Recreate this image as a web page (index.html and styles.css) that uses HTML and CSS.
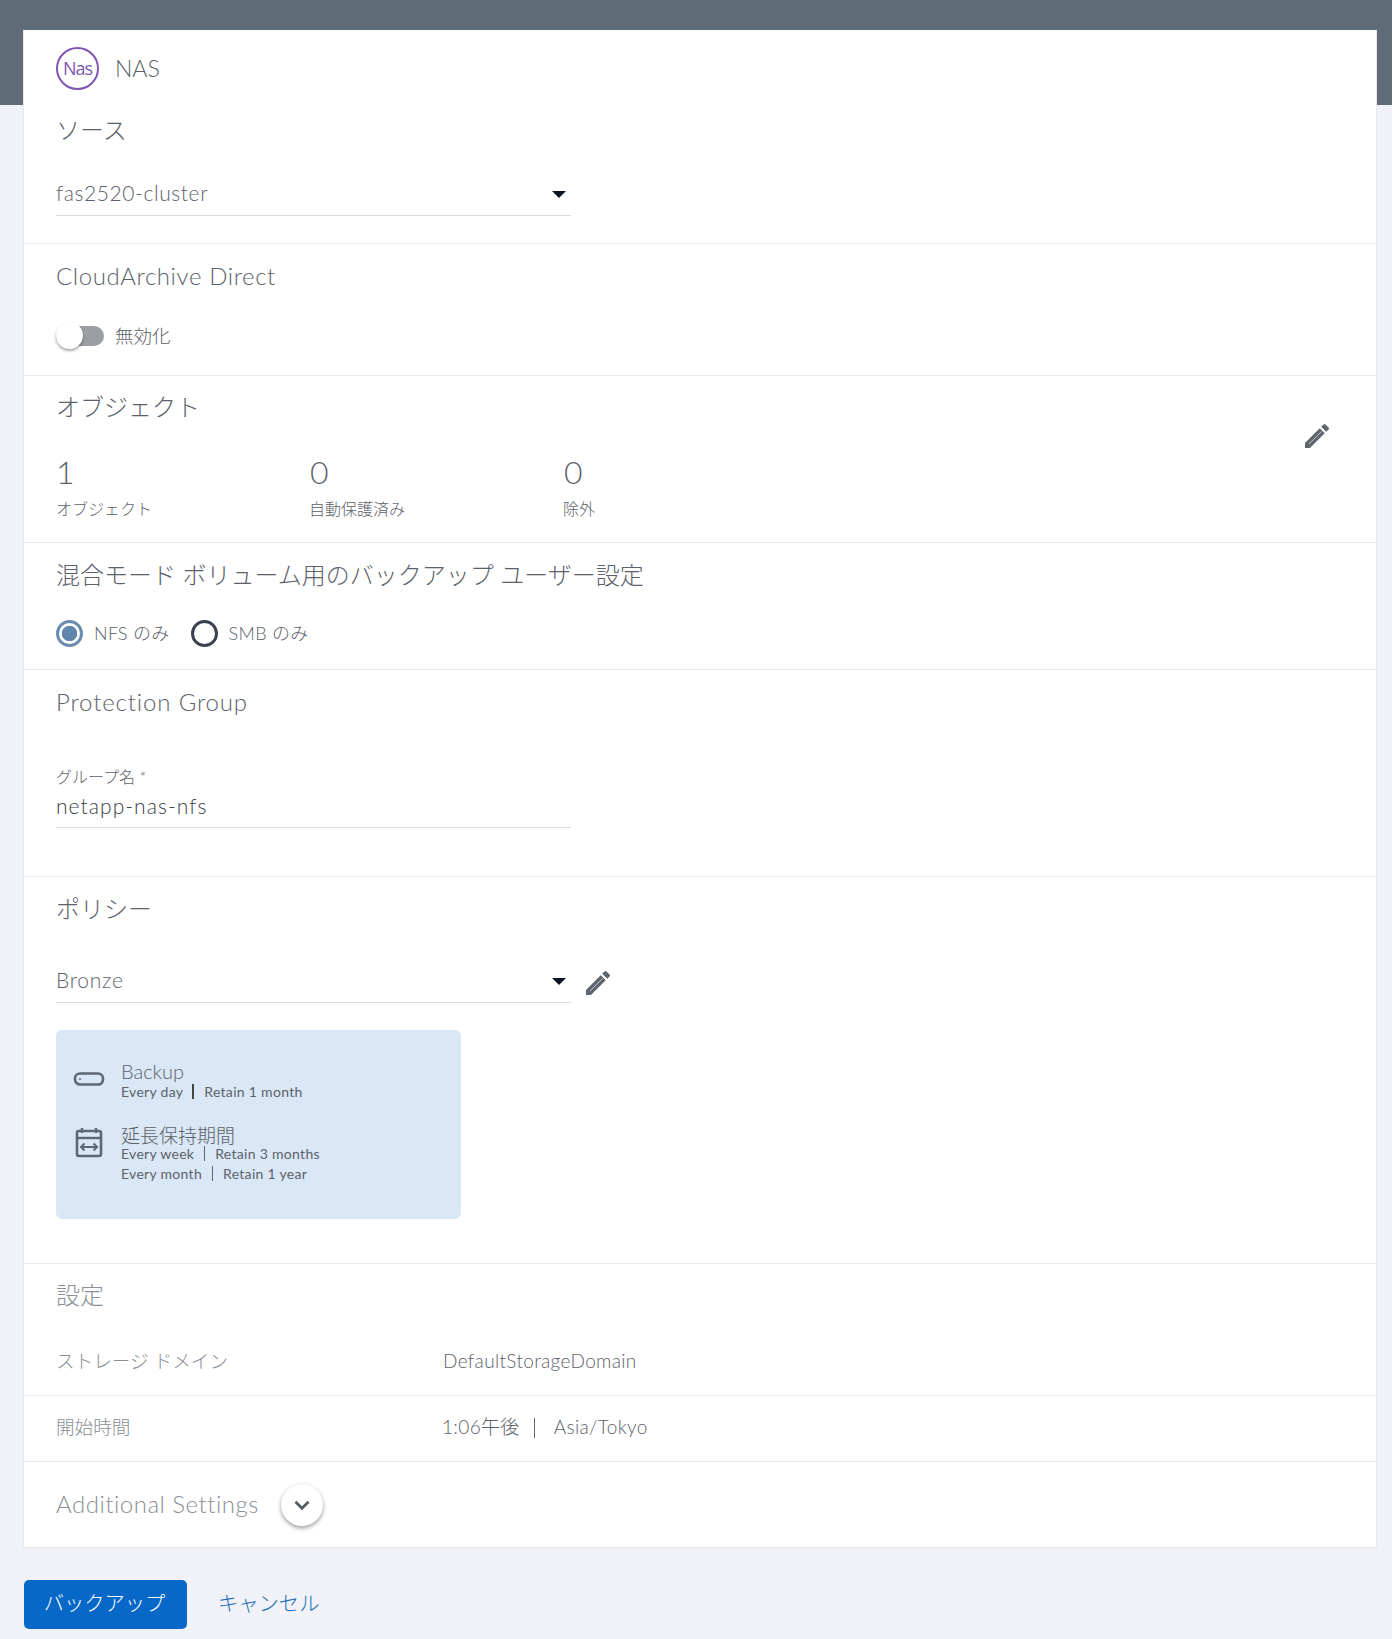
FILE: index.html
```html
<!DOCTYPE html>
<html lang="ja">
<head>
<meta charset="utf-8">
<title>NAS</title>
<link rel="stylesheet" href="styles.css">
</head>
<body>
<div class="hero"></div>
<main class="page">
  <div class="card">
    <section class="sec sec-source">
      <div class="type-row">
        <span class="nas-badge">Nas</span>
        <span class="type-name">NAS</span>
      </div>
      <h2 class="title t-source">ソース</h2>
      <div class="select s-source"><span>fas2520-cluster</span><i class="caret"></i></div>
    </section>
    <section class="sec sec-archive">
      <h2 class="title title-en">CloudArchive Direct</h2>
      <div class="toggle-row">
        <span class="toggle"><span class="knob"></span></span>
        <span class="small">無効化</span>
      </div>
    </section>
    <section class="sec sec-objects">
      <h2 class="title">オブジェクト</h2>
      <div class="stats">
        <div class="stat"><div class="num">1</div><div class="lab">オブジェクト</div></div>
        <div class="stat"><div class="num">0</div><div class="lab">自動保護済み</div></div>
        <div class="stat"><div class="num">0</div><div class="lab">除外</div></div>
      </div>
      <svg class="pencil pencil-obj" viewBox="0 0 24 24"><path d="M3 17.25V21h3.75L17.81 9.94l-3.75-3.75L3 17.25zM20.71 7.04a1 1 0 0 0 0-1.41l-2.34-2.34a1 1 0 0 0-1.41 0l-1.83 1.83 3.75 3.75 1.83-1.83z"/><path class="pencil-line" d="M6 18 15.300 8.700"/></svg>
    </section>
    <section class="sec sec-mixed">
      <h2 class="title">混合モード ボリューム用のバックアップ ユーザー設定</h2>
      <div class="radios">
        <span class="radio on"></span><span class="small r-lab">NFS のみ</span>
        <span class="radio"></span><span class="small r-lab">SMB のみ</span>
      </div>
    </section>
    <section class="sec sec-group">
      <h2 class="title title-en">Protection Group</h2>
      <div class="float-label">グループ名 *</div>
      <div class="select s-group"><span>netapp-nas-nfs</span></div>
    </section>
    <section class="sec sec-policy">
      <h2 class="title">ポリシー</h2>
      <div class="policy-select">
        <div class="select s-policy"><span>Bronze</span><i class="caret"></i></div>
        <svg class="pencil pencil-pol" viewBox="0 0 24 24"><path d="M3 17.25V21h3.75L17.81 9.94l-3.75-3.75L3 17.25zM20.71 7.04a1 1 0 0 0 0-1.41l-2.34-2.34a1 1 0 0 0-1.41 0l-1.83 1.83 3.75 3.75 1.83-1.83z"/><path class="pencil-line" d="M6 18 15.300 8.700"/></svg>
      </div>
      <div class="policy-card">
        <div class="p-row">
          <svg class="p-icon p-icon-pill" viewBox="0 0 32 32"><rect x="2" y="10.500" width="28" height="11" rx="5" fill="none" stroke="#5f6872" stroke-width="2.600"/><circle cx="7" cy="16" r="1" fill="#5f6872"/></svg>
          <div class="p-text">
            <div class="p-head p-head-en">Backup</div>
            <div class="p-sub">Every day<i class="bar bar-strong"></i>Retain 1 month</div>
          </div>
        </div>
        <div class="p-row p-row2">
          <svg class="p-icon p-icon-cal" viewBox="0 0 32 32"><path d="M9 2v5M23 2v5" stroke="#5f6872" stroke-width="2.400" fill="none"/><rect x="4" y="5" width="24" height="25" rx="2" fill="none" stroke="#5f6872" stroke-width="2.600"/><path d="M4 12h24" stroke="#5f6872" stroke-width="2.400"/><path d="M8 21h16M11.500 17.500 8 21l3.500 3.500M20.500 17.500 24 21l-3.500 3.500" stroke="#5f6872" stroke-width="2" fill="none"/></svg>
          <div class="p-text">
            <div class="p-head">延長保持期間</div>
            <div class="p-sub p-sub1">Every week<i class="bar"></i>Retain 3 months</div>
            <div class="p-sub p-sub2">Every month<i class="bar"></i>Retain 1 year</div>
          </div>
        </div>
      </div>
    </section>
    <section class="sec sec-settings">
      <h2 class="title muted">設定</h2>
      <div class="kv kv-first"><span class="k">ストレージ ドメイン</span><span class="v">DefaultStorageDomain</span></div>
    </section>
    <section class="sec sec-start">
      <div class="kv"><span class="k">開始時間</span><span class="v v-time">1:06午後<i class="bar bar-v"></i>Asia/Tokyo</span></div>
    </section>
    <section class="sec sec-more">
      <span class="more-text">Additional Settings</span>
      <button class="round" type="button"><svg viewBox="0 0 24 24"><path d="M6 9 12 15 18 9" fill="none" stroke="#565d66" stroke-width="2.600"/></svg></button>
    </section>
  </div>
  <div class="actions">
    <button class="primary" type="button">バックアップ</button>
    <a class="cancel" href="#">キャンセル</a>
  </div>
</main>
</body>
</html>
```
FILE: styles.css
```css
* { box-sizing: border-box; }
html, body { margin: 0; padding: 0; }
body {
  height: 1639px;
  overflow: hidden;
  background: #f0f2f7;
  color: #5c626a;
  font-family: Lato, "Noto Sans CJK JP", sans-serif;
  font-weight: 300;
  position: relative;
}
.hero { position: absolute; left: 0; top: 0; right: 0; height: 105px; background: #5f6c78; }
.page { position: relative; padding: 30px 16px 0 23px; }
.card { background: #fff; border: 1px solid #e6e8eb; border-top: 0; width: 1354px; height: 1518px; display: flex; flex-direction: column; }
.sec { position: relative; border-bottom: 1px solid #e7e9ec; padding-left: 32px; }
.title { margin: 0; font-size: 24px; font-weight: 300; line-height: 30px; color: #5c626a; }
.title-en { letter-spacing: 0.6px; }
.sec-group .title-en { letter-spacing: .85px; }
.muted { color: #8a8f95; }
.sec-source { height: 214px; padding-top: 17px; }
.type-row { display: flex; align-items: center; height: 42px; }
.nas-badge { width: 43px; height: 43px; border: 2px solid #7d57b2; border-radius: 50%; color: #7d57b2; display: flex; align-items: center; justify-content: center; font-size: 18px; font-weight: 400; font-family: "Open Sans", sans-serif; letter-spacing: -1px; }
.type-name { margin-left: 16px; font-size: 23px; line-height: 30px; }
.t-source { margin-top: 26px; }
.select { width: 515px; height: 46px; border-bottom: 1px solid #d9dbde; display: flex; align-items: center; justify-content: space-between; font-size: 21px; letter-spacing: 0.6px; position: relative; }
.s-source { margin-top: 25px; }
.caret { width: 0; height: 0; border-left: 7px solid transparent; border-right: 7px solid transparent; border-top: 7px solid #0b1420; margin-right: 5px; margin-top: 3px; }
.sec-archive { height: 132px; padding-top: 17px; }
.toggle-row { display: flex; align-items: center; margin-top: 31px; height: 28px; }
.toggle { display: block; position: relative; width: 48px; height: 20px; background: #9b9ea3; border-radius: 10px; }
.knob { position: absolute; left: 0; top: -4px; width: 27px; height: 27px; border-radius: 50%; background: #fff; box-shadow: 0 2px 3px rgba(0,0,0,.35); }
.small { font-size: 18px; line-height: 28px; }
.toggle-row .small { margin-left: 11px; font-size: 18.500px; }
.sec-objects { height: 167px; padding-top: 16px; }
.stats { display: flex; margin-top: 30px; }
.stat { width: 254px; }
.stat + .stat .lab { margin-left: -1px; }
.num { font-size: 32px; line-height: 40px; }
.lab { font-size: 16px; line-height: 24px; margin-top: 5px; }
.pencil { width: 32px; height: 32px; fill: #60666e; display: block; }
.pencil-line { fill: none; stroke: #fff; stroke-width: .7; opacity: .65; }
.pencil-obj { position: absolute; left: 1277px; top: 44px; }
.sec-mixed { height: 127px; padding-top: 17px; }
.radios { display: flex; align-items: center; margin-top: 29px; height: 28px; }
.radio { width: 27px; height: 27px; border-radius: 50%; border: 3px solid #39424e; flex: none; }
.radio.on { border-color: #6a8cae; background: radial-gradient(circle, #6285ab 0 7.500px, #fff 8px); }
.r-lab { margin-left: 11px; margin-right: 21px; font-size: 18px; letter-spacing: .3px; }
.sec-group { height: 207px; padding-top: 17px; }
.float-label { font-size: 16px; line-height: 20px; margin-top: 50px; }
.s-group { height: 41px; margin-top: 0; color: #3a4048; padding-bottom: 4px; letter-spacing: 1.05px; }
.sec-policy { height: 387px; padding-top: 17px; }
.policy-select { display: flex; align-items: center; margin-top: 33px; }
.s-policy { letter-spacing: .75px; }
.pencil-pol { margin-left: 11px; margin-top: 6px; }
.policy-card { width: 405px; height: 189px; margin-top: 27px; background: #d9e7f6; border-radius: 6px; padding: 30px 0 0 17px; }
.p-row { display: flex; }
.p-row2 { margin-top: 24px; }
.p-icon { width: 32px; height: 32px; flex: none; }
.p-icon-pill { margin-top: 3px; }
.p-icon-cal { margin-top: 1px; }
.p-text { margin-left: 16px; }
.p-head { font-size: 19px; line-height: 22px; }
.p-head-en { font-size: 20px; }
.p-sub { font-size: 14px; line-height: 19px; font-weight: 400; letter-spacing: .3px; display: flex; align-items: center; }
.p-sub1 { margin-top: -3px; }
.p-sub2 { margin-top: 1px; }
.bar { display: inline-block; width: 1px; height: 15px; background: #60666e; margin: 0 10px; }
.bar-strong { width: 2px; background: #444; margin-left: 9px; }
.sec-settings { height: 132px; padding-top: 16px; }
.kv { display: flex; font-size: 19px; line-height: 28px; }
.kv-first { margin-top: 37px; }
.k { width: 387px; color: #8a8f95; font-size: 18.600px; }
.v { display: flex; align-items: center; letter-spacing: .35px; }
.v-time { margin-left: -1px; }
.bar-v { height: 20px; margin: 2px 19px 0 14px; }
.sec-start { height: 66px; padding-top: 17px; }
.sec-more { height: 85px; border-bottom: 0; display: flex; align-items: center; padding-bottom: 2px; }
.more-text { font-size: 24px; color: #8a8f95; letter-spacing: .5px; }
.round { width: 42px; height: 42px; margin-left: 22px; margin-top: 2px; padding: 8px; border: 0; border-radius: 50%; background: #fff; box-shadow: 0 2px 4px rgba(0,0,0,.4); }
.round svg { display: block; width: 26px; height: 26px; }
.actions { display: flex; align-items: center; margin-top: 32px; margin-left: 1px; }
.primary { width: 163px; height: 49px; padding: 0 2px 5px 0; background: #0768c8; color: #fff; border: 0; border-radius: 5px; font: 300 20.300px Lato, "Noto Sans CJK JP", sans-serif; }
.cancel { margin-left: 31px; padding-bottom: 6px; color: #1a6db8; font-size: 20.300px; text-decoration: none; }
```
